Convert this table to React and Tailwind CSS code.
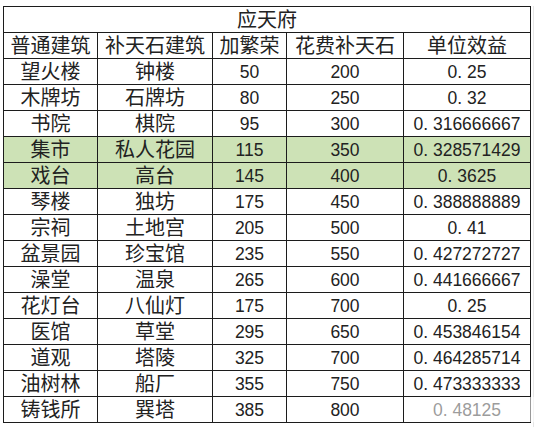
import React from 'react';

const rows = [
    ['望火楼', '钟楼', '50', '200', '0. 25'],
    ['木牌坊', '石牌坊', '80', '250', '0. 32'],
    ['书院', '棋院', '95', '300', '0. 316666667'],
    ['集市', '私人花园', '115', '350', '0. 328571429', true],
    ['戏台', '高台', '145', '400', '0. 3625', true],
    ['琴楼', '独坊', '175', '450', '0. 388888889'],
    ['宗祠', '土地宫', '205', '500', '0. 41'],
    ['盆景园', '珍宝馆', '235', '550', '0. 427272727'],
    ['澡堂', '温泉', '265', '600', '0. 441666667'],
    ['花灯台', '八仙灯', '175', '700', '0. 25'],
    ['医馆', '草堂', '295', '650', '0. 453846154'],
    ['道观', '塔陵', '325', '700', '0. 464285714'],
    ['油树林', '船厂', '355', '750', '0. 473333333'],
    ['铸钱所', '巽塔', '385', '800', '0. 48125'],
];

const headers = ['普通建筑', '补天石建筑', '加繁荣', '花费补天石', '单位效益'];

const cell = 'h-[26px] leading-none flex items-center justify-center border-r border-b border-[#1c1c1c] whitespace-nowrap overflow-visible';
const zh = 'text-[20px] text-[#222]';
const num = 'text-[17.5px] text-[#222] pt-[2px]';

export default function App() {
    return (
        <div className="w-[537px] h-[427px] bg-white overflow-hidden" style={{ fontFamily: '"Liberation Sans", "Noto Sans CJK SC", sans-serif' }}>
            <div className="pt-[6px] pl-[3px] flex">
                <div className="grid grid-cols-[94px_115px_74px_117px_127px] auto-rows-[26px] border-l border-t border-[#1c1c1c] w-[528px] h-[417px]">
                    <div className={`${cell} ${zh} col-span-5`}>应天府</div>
                    {headers.map((h, i) => (
                        <div key={i} className={`${cell} ${zh}`}>{h}</div>
                    ))}
                    {rows.map((r, i) => {
                        const bg = r[5] ? 'bg-[#cde2b6]' : '';
                        const last = i === rows.length - 1;
                        return (
                            <React.Fragment key={i}>
                                <div className={`${cell} ${zh} ${bg}`}>{r[0]}</div>
                                <div className={`${cell} ${zh} ${bg}`}>{r[1]}</div>
                                <div className={`${cell} ${num} ${bg}`}>{r[2]}</div>
                                <div className={`${cell} ${num} ${bg}`}>{r[3]}</div>
                                <div className={`${cell} ${num} ${bg} relative`}>
                                    {r[4]}
                                    {last && <div className="absolute inset-0 -right-[8px] bg-white/55"></div>}
                                </div>
                            </React.Fragment>
                        );
                    })}
                </div>
                <div className="ml-[2px] w-px h-[427px] bg-[#e6e6e6]"></div>
            </div>
        </div>
    );
}
